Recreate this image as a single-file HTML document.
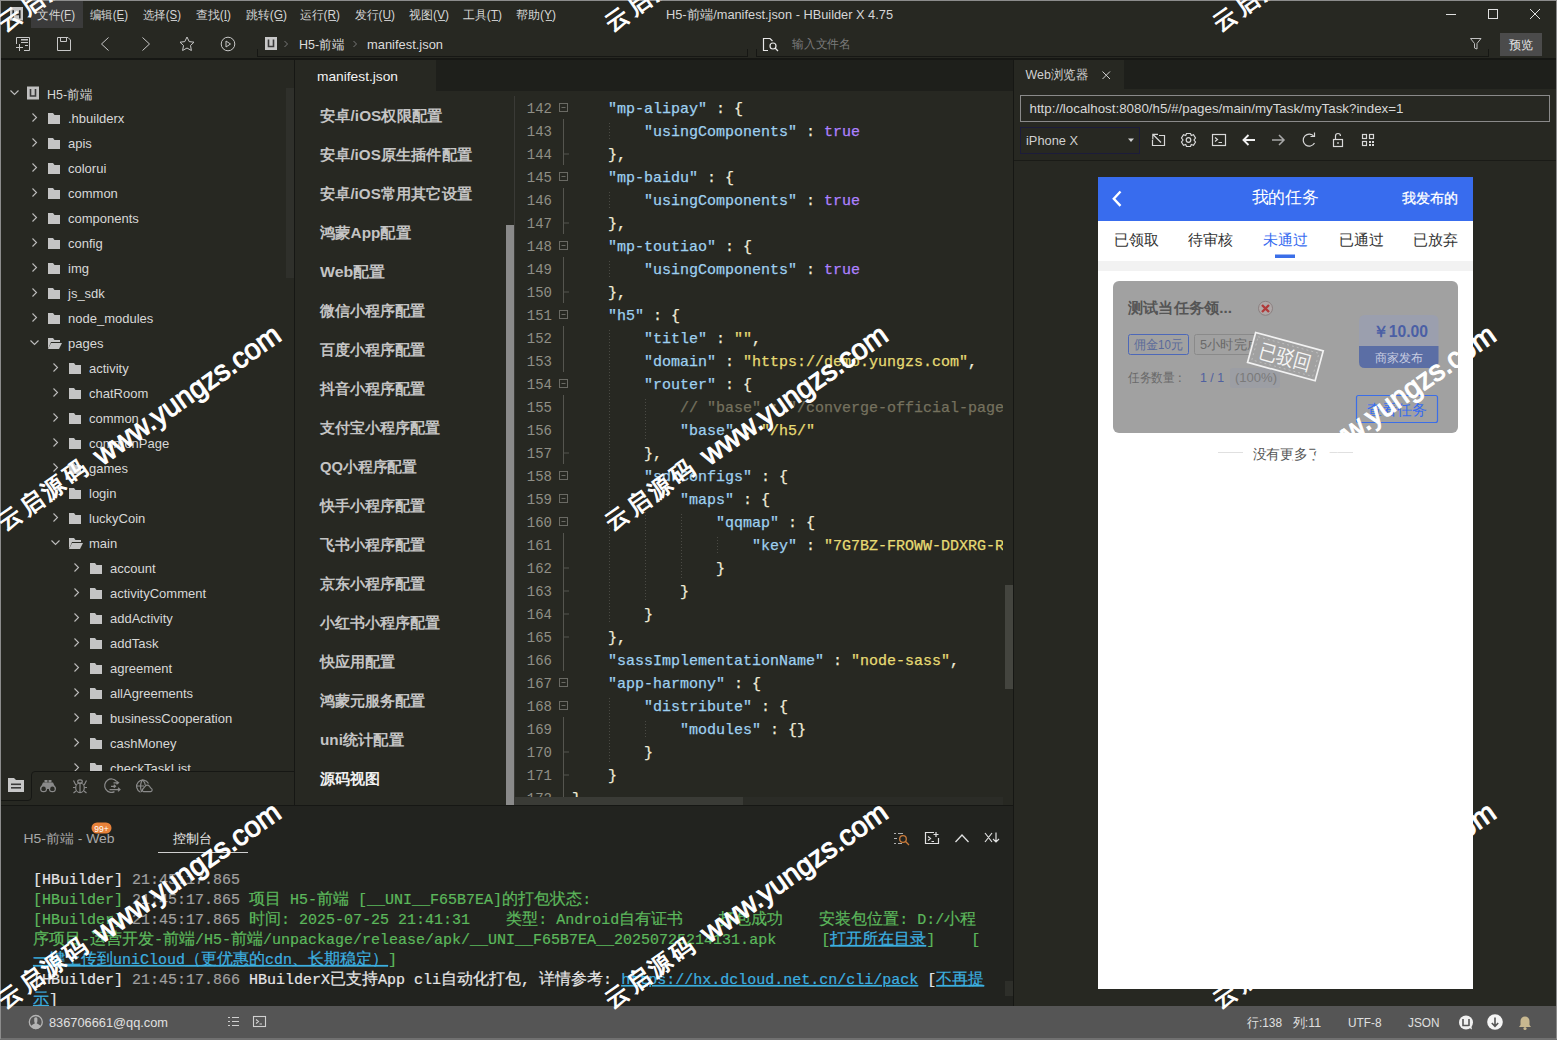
<!DOCTYPE html>
<html><head><meta charset="utf-8"><title>HBuilder X</title>
<style>html,body{margin:0;padding:0;background:#272822;width:1557px;height:1040px;overflow:hidden}</style>
</head><body><svg width="1557" height="1040" viewBox="0 0 1557 1040" style="display:block"><rect x="0" y="0" width="1557" height="1040" fill="#272822" />
<rect x="31" y="1" width="52" height="27" fill="#3b3b3b" />
<rect x="10" y="7" width="13" height="13.5" fill="#c8c8c8"/><path d="M13.2 10.3 V18.5 M19.8 10.3 V18.5 M13.2 14.4 H19.8" stroke="#2a2a2a" stroke-width="1.6" fill="none"/>
<text x="37" y="18.9" font-size="12" fill="#d6d6d6" font-family="'Liberation Sans', sans-serif" textLength="38" lengthAdjust="spacingAndGlyphs" >文件(F)</text>
<rect x="65.2" y="20" width="6" height="1" fill="#c8c8c8"/>
<text x="90" y="18.9" font-size="12" fill="#d6d6d6" font-family="'Liberation Sans', sans-serif" textLength="38" lengthAdjust="spacingAndGlyphs" >编辑(E)</text>
<rect x="117.7" y="20" width="6.5" height="1" fill="#c8c8c8"/>
<text x="143" y="18.9" font-size="12" fill="#d6d6d6" font-family="'Liberation Sans', sans-serif" textLength="38" lengthAdjust="spacingAndGlyphs" >选择(S)</text>
<rect x="170.7" y="20" width="6.5" height="1" fill="#c8c8c8"/>
<text x="196" y="18.9" font-size="12" fill="#d6d6d6" font-family="'Liberation Sans', sans-serif" textLength="35" lengthAdjust="spacingAndGlyphs" >查找(I)</text>
<rect x="224.2" y="20" width="3" height="1" fill="#c8c8c8"/>
<text x="246" y="18.9" font-size="12" fill="#d6d6d6" font-family="'Liberation Sans', sans-serif" textLength="41" lengthAdjust="spacingAndGlyphs" >跳转(G)</text>
<rect x="275.7" y="20" width="7.5" height="1" fill="#c8c8c8"/>
<text x="300" y="18.9" font-size="12" fill="#d6d6d6" font-family="'Liberation Sans', sans-serif" textLength="40" lengthAdjust="spacingAndGlyphs" >运行(R)</text>
<rect x="329.2" y="20" width="7" height="1" fill="#c8c8c8"/>
<text x="355" y="18.9" font-size="12" fill="#d6d6d6" font-family="'Liberation Sans', sans-serif" textLength="40" lengthAdjust="spacingAndGlyphs" >发行(U)</text>
<rect x="384.2" y="20" width="7" height="1" fill="#c8c8c8"/>
<text x="409" y="18.9" font-size="12" fill="#d6d6d6" font-family="'Liberation Sans', sans-serif" textLength="40" lengthAdjust="spacingAndGlyphs" >视图(V)</text>
<rect x="438.2" y="20" width="7" height="1" fill="#c8c8c8"/>
<text x="463" y="18.9" font-size="12" fill="#d6d6d6" font-family="'Liberation Sans', sans-serif" textLength="39" lengthAdjust="spacingAndGlyphs" >工具(T)</text>
<rect x="491.7" y="20" width="6.5" height="1" fill="#c8c8c8"/>
<text x="516" y="18.9" font-size="12" fill="#d6d6d6" font-family="'Liberation Sans', sans-serif" textLength="40" lengthAdjust="spacingAndGlyphs" >帮助(Y)</text>
<rect x="545.7" y="20" width="6.5" height="1" fill="#c8c8c8"/>
<text x="666" y="18.5" font-size="12.5" fill="#d6d6d6" font-family="'Liberation Sans', sans-serif" textLength="227" lengthAdjust="spacingAndGlyphs" >H5-前端/manifest.json - HBuilder X 4.75</text>
<line x1="1446" y1="14.5" x2="1456" y2="14.5" stroke="#e0e0e0" stroke-width="1" />
<rect x="1488.5" y="9.5" width="9" height="9" fill="none" stroke="#e0e0e0" stroke-width="1"/>
<line x1="1530" y1="9" x2="1540" y2="19" stroke="#e0e0e0" stroke-width="1" />
<line x1="1540" y1="9" x2="1530" y2="19" stroke="#e0e0e0" stroke-width="1" />
<g fill="none" stroke="#c8c8c8" stroke-width="1"><path d="M16.5 44 V37.5 H29.5 V50.5 H24"/><path d="M16 47.5 H23 M19.5 44 V51"/></g>
<g fill="#c8c8c8"><rect x="21" y="39" width="7" height="1.5"/><rect x="21" y="42" width="7" height="1"/><rect x="25" y="45" width="3" height="1"/></g>
<g fill="none" stroke="#c8c8c8" stroke-width="1"><path d="M57.5 37.5 H68 L70.5 40 V50.5 H57.5 Z"/><path d="M60.5 37.5 V41.5 H66.5 V37.5"/></g>
<path d="M108.5 37.5 L101.5 44 L108.5 50.5" fill="none" stroke="#c8c8c8" stroke-width="1"/>
<path d="M142.5 37.5 L149.5 44 L142.5 50.5" fill="none" stroke="#c8c8c8" stroke-width="1"/>
<path d="M187 37 L189.2 41.6 L194 42.2 L190.5 45.5 L191.4 50.5 L187 48 L182.6 50.5 L183.5 45.5 L180 42.2 L184.8 41.6 Z" fill="none" stroke="#c8c8c8" stroke-width="1" stroke-linejoin="round"/>
<circle cx="228" cy="44" r="6.8" fill="none" stroke="#c8c8c8" stroke-width="1"/><path d="M226 41 L230.5 44 L226 47 Z" fill="none" stroke="#c8c8c8" stroke-width="1"/>
<line x1="257.5" y1="49" x2="257.5" y2="57" stroke="#161714" stroke-width="1" />
<line x1="257" y1="56.5" x2="748" y2="56.5" stroke="#161714" stroke-width="1" />
<line x1="747.5" y1="49" x2="747.5" y2="57" stroke="#161714" stroke-width="1" />
<rect x="265" y="37" width="12" height="13" fill="#c8c8c8" />
<path d="M268.5 39.5 V46.5 H273.5 V39.5" fill="none" stroke="#3a3a3a" stroke-width="1.6"/>
<path d="M284.5 41 L287.5 44 L284.5 47" fill="none" stroke="#777" stroke-width="1"/>
<text x="299" y="49" font-size="13" fill="#dcdcdc" font-family="'Liberation Sans', sans-serif" textLength="45" lengthAdjust="spacingAndGlyphs" >H5-前端</text>
<path d="M353.5 41 L356.5 44 L353.5 47" fill="none" stroke="#777" stroke-width="1"/>
<text x="367" y="49" font-size="13" fill="#dcdcdc" font-family="'Liberation Sans', sans-serif" textLength="76" lengthAdjust="spacingAndGlyphs" >manifest.json</text>
<line x1="756.5" y1="49" x2="756.5" y2="57" stroke="#161714" stroke-width="1" />
<line x1="756" y1="56.5" x2="1489" y2="56.5" stroke="#161714" stroke-width="1" />
<line x1="1488.5" y1="49" x2="1488.5" y2="57" stroke="#161714" stroke-width="1" />
<g fill="none" stroke="#e8e8e8" stroke-width="1.2"><path d="M768 50.5 H763.5 V38.5 H770 L772.5 41"/><circle cx="773" cy="46" r="3"/><path d="M775 48 L778 51"/></g>
<text x="792" y="48.3" font-size="12" fill="#7a7a7a" font-family="'Liberation Sans', sans-serif" textLength="59" lengthAdjust="spacingAndGlyphs" >输入文件名</text>
<path d="M1470.5 38.5 H1481 L1477 43.5 V49 L1474.5 48 V43.5 Z" fill="none" stroke="#c0c0c0" stroke-width="1"/>
<rect x="1500" y="33" width="42" height="23" fill="#4b4b4b" />
<text x="1509" y="48.8" font-size="12" fill="#e8e8e8" font-family="'Liberation Sans', sans-serif" textLength="24" lengthAdjust="spacingAndGlyphs" >预览</text>
<rect x="0" y="58" width="1557" height="2" fill="#161714" />
<rect x="286" y="88" width="8" height="190" fill="#2f302b" />
<rect x="294" y="60" width="1" height="745" fill="#161714" />
<svg x="0" y="60" width="286" height="711" overflow="hidden"><g transform="translate(0,-60)">
<path d="M10.5 90.5 L14.5 94.5 L18.5 90.5" fill="none" stroke="#bdbdbd" stroke-width="1.1"/>
<rect x="27" y="86.5" width="12" height="13" fill="#c0c0c0" />
<path d="M30.5 89 V96 H35.5 V89" fill="none" stroke="#3a3a3a" stroke-width="1.6"/>
<text x="47" y="98.5" font-size="13" fill="#d8d8d8" font-family="'Liberation Sans', sans-serif" textLength="45" lengthAdjust="spacingAndGlyphs" >H5-前端</text>
<path d="M32.5 113.5 L36.5 117.5 L32.5 121.5" fill="none" stroke="#bdbdbd" stroke-width="1.1"/>
<path d="M48 113 H53 L54.5 115 H60 V124 H48 Z" fill="#c4c4c4"/>
<text x="68" y="123" font-size="13" fill="#d8d8d8" font-family="'Liberation Sans', sans-serif" >.hbuilderx</text>
<path d="M32.5 138.5 L36.5 142.5 L32.5 146.5" fill="none" stroke="#bdbdbd" stroke-width="1.1"/>
<path d="M48 138 H53 L54.5 140 H60 V149 H48 Z" fill="#c4c4c4"/>
<text x="68" y="148" font-size="13" fill="#d8d8d8" font-family="'Liberation Sans', sans-serif" >apis</text>
<path d="M32.5 163.5 L36.5 167.5 L32.5 171.5" fill="none" stroke="#bdbdbd" stroke-width="1.1"/>
<path d="M48 163 H53 L54.5 165 H60 V174 H48 Z" fill="#c4c4c4"/>
<text x="68" y="173" font-size="13" fill="#d8d8d8" font-family="'Liberation Sans', sans-serif" >colorui</text>
<path d="M32.5 188.5 L36.5 192.5 L32.5 196.5" fill="none" stroke="#bdbdbd" stroke-width="1.1"/>
<path d="M48 188 H53 L54.5 190 H60 V199 H48 Z" fill="#c4c4c4"/>
<text x="68" y="198" font-size="13" fill="#d8d8d8" font-family="'Liberation Sans', sans-serif" >common</text>
<path d="M32.5 213.5 L36.5 217.5 L32.5 221.5" fill="none" stroke="#bdbdbd" stroke-width="1.1"/>
<path d="M48 213 H53 L54.5 215 H60 V224 H48 Z" fill="#c4c4c4"/>
<text x="68" y="223" font-size="13" fill="#d8d8d8" font-family="'Liberation Sans', sans-serif" >components</text>
<path d="M32.5 238.5 L36.5 242.5 L32.5 246.5" fill="none" stroke="#bdbdbd" stroke-width="1.1"/>
<path d="M48 238 H53 L54.5 240 H60 V249 H48 Z" fill="#c4c4c4"/>
<text x="68" y="248" font-size="13" fill="#d8d8d8" font-family="'Liberation Sans', sans-serif" >config</text>
<path d="M32.5 263.5 L36.5 267.5 L32.5 271.5" fill="none" stroke="#bdbdbd" stroke-width="1.1"/>
<path d="M48 263 H53 L54.5 265 H60 V274 H48 Z" fill="#c4c4c4"/>
<text x="68" y="273" font-size="13" fill="#d8d8d8" font-family="'Liberation Sans', sans-serif" >img</text>
<path d="M32.5 288.5 L36.5 292.5 L32.5 296.5" fill="none" stroke="#bdbdbd" stroke-width="1.1"/>
<path d="M48 288 H53 L54.5 290 H60 V299 H48 Z" fill="#c4c4c4"/>
<text x="68" y="298" font-size="13" fill="#d8d8d8" font-family="'Liberation Sans', sans-serif" >js_sdk</text>
<path d="M32.5 313.5 L36.5 317.5 L32.5 321.5" fill="none" stroke="#bdbdbd" stroke-width="1.1"/>
<path d="M48 313 H53 L54.5 315 H60 V324 H48 Z" fill="#c4c4c4"/>
<text x="68" y="323" font-size="13" fill="#d8d8d8" font-family="'Liberation Sans', sans-serif" >node_modules</text>
<path d="M30.5 340.5 L34.5 344.5 L38.5 340.5" fill="none" stroke="#bdbdbd" stroke-width="1.1"/>
<path d="M48 338 H53 L54.5 340 H60 V342 H51 L48 349 Z" fill="#c4c4c4"/><path d="M51 343 H62 L59 349 H48 Z" fill="#c4c4c4"/>
<text x="68" y="348" font-size="13" fill="#d8d8d8" font-family="'Liberation Sans', sans-serif" >pages</text>
<path d="M53.5 363.5 L57.5 367.5 L53.5 371.5" fill="none" stroke="#bdbdbd" stroke-width="1.1"/>
<path d="M69 363 H74 L75.5 365 H81 V374 H69 Z" fill="#c4c4c4"/>
<text x="89" y="373" font-size="13" fill="#d8d8d8" font-family="'Liberation Sans', sans-serif" >activity</text>
<path d="M53.5 388.5 L57.5 392.5 L53.5 396.5" fill="none" stroke="#bdbdbd" stroke-width="1.1"/>
<path d="M69 388 H74 L75.5 390 H81 V399 H69 Z" fill="#c4c4c4"/>
<text x="89" y="398" font-size="13" fill="#d8d8d8" font-family="'Liberation Sans', sans-serif" >chatRoom</text>
<path d="M53.5 413.5 L57.5 417.5 L53.5 421.5" fill="none" stroke="#bdbdbd" stroke-width="1.1"/>
<path d="M69 413 H74 L75.5 415 H81 V424 H69 Z" fill="#c4c4c4"/>
<text x="89" y="423" font-size="13" fill="#d8d8d8" font-family="'Liberation Sans', sans-serif" >common</text>
<path d="M53.5 438.5 L57.5 442.5 L53.5 446.5" fill="none" stroke="#bdbdbd" stroke-width="1.1"/>
<path d="M69 438 H74 L75.5 440 H81 V449 H69 Z" fill="#c4c4c4"/>
<text x="89" y="448" font-size="13" fill="#d8d8d8" font-family="'Liberation Sans', sans-serif" >commonPage</text>
<path d="M53.5 463.5 L57.5 467.5 L53.5 471.5" fill="none" stroke="#bdbdbd" stroke-width="1.1"/>
<path d="M69 463 H74 L75.5 465 H81 V474 H69 Z" fill="#c4c4c4"/>
<text x="89" y="473" font-size="13" fill="#d8d8d8" font-family="'Liberation Sans', sans-serif" >games</text>
<path d="M53.5 488.5 L57.5 492.5 L53.5 496.5" fill="none" stroke="#bdbdbd" stroke-width="1.1"/>
<path d="M69 488 H74 L75.5 490 H81 V499 H69 Z" fill="#c4c4c4"/>
<text x="89" y="498" font-size="13" fill="#d8d8d8" font-family="'Liberation Sans', sans-serif" >login</text>
<path d="M53.5 513.5 L57.5 517.5 L53.5 521.5" fill="none" stroke="#bdbdbd" stroke-width="1.1"/>
<path d="M69 513 H74 L75.5 515 H81 V524 H69 Z" fill="#c4c4c4"/>
<text x="89" y="523" font-size="13" fill="#d8d8d8" font-family="'Liberation Sans', sans-serif" >luckyCoin</text>
<path d="M51.5 540.5 L55.5 544.5 L59.5 540.5" fill="none" stroke="#bdbdbd" stroke-width="1.1"/>
<path d="M69 538 H74 L75.5 540 H81 V542 H72 L69 549 Z" fill="#c4c4c4"/><path d="M72 543 H83 L80 549 H69 Z" fill="#c4c4c4"/>
<text x="89" y="548" font-size="13" fill="#d8d8d8" font-family="'Liberation Sans', sans-serif" >main</text>
<path d="M74.5 563.5 L78.5 567.5 L74.5 571.5" fill="none" stroke="#bdbdbd" stroke-width="1.1"/>
<path d="M90 563 H95 L96.5 565 H102 V574 H90 Z" fill="#c4c4c4"/>
<text x="110" y="573" font-size="13" fill="#d8d8d8" font-family="'Liberation Sans', sans-serif" >account</text>
<path d="M74.5 588.5 L78.5 592.5 L74.5 596.5" fill="none" stroke="#bdbdbd" stroke-width="1.1"/>
<path d="M90 588 H95 L96.5 590 H102 V599 H90 Z" fill="#c4c4c4"/>
<text x="110" y="598" font-size="13" fill="#d8d8d8" font-family="'Liberation Sans', sans-serif" >activityComment</text>
<path d="M74.5 613.5 L78.5 617.5 L74.5 621.5" fill="none" stroke="#bdbdbd" stroke-width="1.1"/>
<path d="M90 613 H95 L96.5 615 H102 V624 H90 Z" fill="#c4c4c4"/>
<text x="110" y="623" font-size="13" fill="#d8d8d8" font-family="'Liberation Sans', sans-serif" >addActivity</text>
<path d="M74.5 638.5 L78.5 642.5 L74.5 646.5" fill="none" stroke="#bdbdbd" stroke-width="1.1"/>
<path d="M90 638 H95 L96.5 640 H102 V649 H90 Z" fill="#c4c4c4"/>
<text x="110" y="648" font-size="13" fill="#d8d8d8" font-family="'Liberation Sans', sans-serif" >addTask</text>
<path d="M74.5 663.5 L78.5 667.5 L74.5 671.5" fill="none" stroke="#bdbdbd" stroke-width="1.1"/>
<path d="M90 663 H95 L96.5 665 H102 V674 H90 Z" fill="#c4c4c4"/>
<text x="110" y="673" font-size="13" fill="#d8d8d8" font-family="'Liberation Sans', sans-serif" >agreement</text>
<path d="M74.5 688.5 L78.5 692.5 L74.5 696.5" fill="none" stroke="#bdbdbd" stroke-width="1.1"/>
<path d="M90 688 H95 L96.5 690 H102 V699 H90 Z" fill="#c4c4c4"/>
<text x="110" y="698" font-size="13" fill="#d8d8d8" font-family="'Liberation Sans', sans-serif" >allAgreements</text>
<path d="M74.5 713.5 L78.5 717.5 L74.5 721.5" fill="none" stroke="#bdbdbd" stroke-width="1.1"/>
<path d="M90 713 H95 L96.5 715 H102 V724 H90 Z" fill="#c4c4c4"/>
<text x="110" y="723" font-size="13" fill="#d8d8d8" font-family="'Liberation Sans', sans-serif" >businessCooperation</text>
<path d="M74.5 738.5 L78.5 742.5 L74.5 746.5" fill="none" stroke="#bdbdbd" stroke-width="1.1"/>
<path d="M90 738 H95 L96.5 740 H102 V749 H90 Z" fill="#c4c4c4"/>
<text x="110" y="748" font-size="13" fill="#d8d8d8" font-family="'Liberation Sans', sans-serif" >cashMoney</text>
<path d="M74.5 763.5 L78.5 767.5 L74.5 771.5" fill="none" stroke="#bdbdbd" stroke-width="1.1"/>
<path d="M90 763 H95 L96.5 765 H102 V774 H90 Z" fill="#c4c4c4"/>
<text x="110" y="773" font-size="13" fill="#d8d8d8" font-family="'Liberation Sans', sans-serif" >checkTaskList</text>
</g></svg>
<path d="M294 771.5 H35 Q31.5 771.5 31.5 775 V797 Q31.5 800.5 28 800.5 H1" fill="none" stroke="#161714" stroke-width="1"/>
<path d="M8 778 H14 L16 780 H24 V792 H8 Z" fill="#c8c8c8"/><rect x="11" y="783.5" width="10" height="1.6" fill="#3a3a3a"/><rect x="11" y="787" width="10" height="1.6" fill="#3a3a3a"/>
<g fill="#8a8a8a"><path d="M44.5 780 H47.5 V782.5 H44.5 Z M48.5 780 H51.5 V782.5 H48.5 Z"/><path d="M43 782.5 H53 L56 789 H40 Z"/></g><g fill="none" stroke="#8a8a8a" stroke-width="1.3"><circle cx="43.6" cy="788.8" r="2.9"/><circle cx="52.4" cy="788.8" r="2.9"/></g><g fill="#2a2b26"><circle cx="43.6" cy="788.8" r="2.2"/><circle cx="52.4" cy="788.8" r="2.2"/></g>
<g fill="none" stroke="#8a8a8a" stroke-width="1.2"><ellipse cx="80" cy="787.8" rx="4.3" ry="4.8"/><ellipse cx="80" cy="781.6" rx="2.3" ry="1.7"/><path d="M80 783.5 V792 M75.8 785 L73.5 780.5 M84.2 785 L86.5 780.5 M75.5 787.5 H73 M84.5 787.5 H87 M76 791 L73.5 793 M84 791 L86.5 793"/></g>
<g fill="none" stroke="#8a8a8a" stroke-width="1.2"><path d="M116.5 781.3 A6.7 6.7 0 1 0 114.5 791.6"/><path d="M113.5 782.8 H118 M116.5 781.3 L118.5 782.8 L116.5 784.3 M111 786.3 H115.5 M113.8 784.8 L115.5 786.3 L113.8 787.8 M109.5 789.6 H120 M118 787.8 L120 789.6 L118 791.4"/></g>
<g fill="none" stroke="#8a8a8a" stroke-width="1.2"><path d="M148.5 783.5 A6.3 6.3 0 1 0 140.5 792.2"/><path d="M142.3 779.7 Q139 786 141.8 792 M142.3 779.7 Q145.5 783 145 785 M136 786 H144"/><path d="M143.5 791.6 H150.7 A1.7 1.7 0 0 0 151 788.3 L149.5 786.3 A2.7 2.7 0 0 0 145 786.3 L143.3 788.6 A1.6 1.6 0 0 0 143.5 791.6 Z"/></g>
<rect x="295" y="60" width="718" height="31" fill="#1e1f1b" />
<rect x="295" y="60" width="141" height="31" fill="#272822" />
<text x="317" y="81" font-size="13" fill="#f2f2f2" font-family="'Liberation Sans', sans-serif" textLength="81" lengthAdjust="spacingAndGlyphs" >manifest.json</text>
<text x="320" y="120.8" font-size="15" fill="#c4c4c4" font-family="'Liberation Sans', sans-serif" font-weight="bold" textLength="122.5" lengthAdjust="spacingAndGlyphs" >安卓/iOS权限配置</text>
<text x="320" y="159.8" font-size="15" fill="#c4c4c4" font-family="'Liberation Sans', sans-serif" font-weight="bold" textLength="152" lengthAdjust="spacingAndGlyphs" >安卓/iOS原生插件配置</text>
<text x="320" y="198.8" font-size="15" fill="#c4c4c4" font-family="'Liberation Sans', sans-serif" font-weight="bold" textLength="152" lengthAdjust="spacingAndGlyphs" >安卓/iOS常用其它设置</text>
<text x="320" y="237.8" font-size="15" fill="#c4c4c4" font-family="'Liberation Sans', sans-serif" font-weight="bold" textLength="91" lengthAdjust="spacingAndGlyphs" >鸿蒙App配置</text>
<text x="320" y="276.8" font-size="15" fill="#c4c4c4" font-family="'Liberation Sans', sans-serif" font-weight="bold" textLength="65" lengthAdjust="spacingAndGlyphs" >Web配置</text>
<text x="320" y="315.8" font-size="15" fill="#c4c4c4" font-family="'Liberation Sans', sans-serif" font-weight="bold" textLength="105" lengthAdjust="spacingAndGlyphs" >微信小程序配置</text>
<text x="320" y="354.8" font-size="15" fill="#c4c4c4" font-family="'Liberation Sans', sans-serif" font-weight="bold" textLength="105" lengthAdjust="spacingAndGlyphs" >百度小程序配置</text>
<text x="320" y="393.8" font-size="15" fill="#c4c4c4" font-family="'Liberation Sans', sans-serif" font-weight="bold" textLength="105" lengthAdjust="spacingAndGlyphs" >抖音小程序配置</text>
<text x="320" y="432.8" font-size="15" fill="#c4c4c4" font-family="'Liberation Sans', sans-serif" font-weight="bold" textLength="120" lengthAdjust="spacingAndGlyphs" >支付宝小程序配置</text>
<text x="320" y="471.8" font-size="15" fill="#c4c4c4" font-family="'Liberation Sans', sans-serif" font-weight="bold" textLength="97" lengthAdjust="spacingAndGlyphs" >QQ小程序配置</text>
<text x="320" y="510.8" font-size="15" fill="#c4c4c4" font-family="'Liberation Sans', sans-serif" font-weight="bold" textLength="105" lengthAdjust="spacingAndGlyphs" >快手小程序配置</text>
<text x="320" y="549.8" font-size="15" fill="#c4c4c4" font-family="'Liberation Sans', sans-serif" font-weight="bold" textLength="105" lengthAdjust="spacingAndGlyphs" >飞书小程序配置</text>
<text x="320" y="588.8" font-size="15" fill="#c4c4c4" font-family="'Liberation Sans', sans-serif" font-weight="bold" textLength="105" lengthAdjust="spacingAndGlyphs" >京东小程序配置</text>
<text x="320" y="627.8" font-size="15" fill="#c4c4c4" font-family="'Liberation Sans', sans-serif" font-weight="bold" textLength="120" lengthAdjust="spacingAndGlyphs" >小红书小程序配置</text>
<text x="320" y="666.8" font-size="15" fill="#c4c4c4" font-family="'Liberation Sans', sans-serif" font-weight="bold" textLength="75" lengthAdjust="spacingAndGlyphs" >快应用配置</text>
<text x="320" y="705.8" font-size="15" fill="#c4c4c4" font-family="'Liberation Sans', sans-serif" font-weight="bold" textLength="105" lengthAdjust="spacingAndGlyphs" >鸿蒙元服务配置</text>
<text x="320" y="744.8" font-size="15" fill="#c4c4c4" font-family="'Liberation Sans', sans-serif" font-weight="bold" textLength="84" lengthAdjust="spacingAndGlyphs" >uni统计配置</text>
<text x="320" y="783.8" font-size="15" fill="#f0f0f0" font-family="'Liberation Sans', sans-serif" font-weight="bold" textLength="60" lengthAdjust="spacingAndGlyphs" >源码视图</text>
<rect x="506" y="225" width="8" height="580" fill="#8a8a8a" />
<rect x="514" y="96" width="1" height="709" fill="#3a3a36" />
<svg x="515" y="91" width="488" height="706" overflow="hidden"><g transform="translate(-515,-91)">
<text x="552" y="113" font-size="14" fill="#8f8f86" font-family="'Liberation Mono', monospace" text-anchor="end" >142</text>
<text x="552" y="136" font-size="14" fill="#8f8f86" font-family="'Liberation Mono', monospace" text-anchor="end" >143</text>
<text x="552" y="159" font-size="14" fill="#8f8f86" font-family="'Liberation Mono', monospace" text-anchor="end" >144</text>
<text x="552" y="182" font-size="14" fill="#8f8f86" font-family="'Liberation Mono', monospace" text-anchor="end" >145</text>
<text x="552" y="205" font-size="14" fill="#8f8f86" font-family="'Liberation Mono', monospace" text-anchor="end" >146</text>
<text x="552" y="228" font-size="14" fill="#8f8f86" font-family="'Liberation Mono', monospace" text-anchor="end" >147</text>
<text x="552" y="251" font-size="14" fill="#8f8f86" font-family="'Liberation Mono', monospace" text-anchor="end" >148</text>
<text x="552" y="274" font-size="14" fill="#8f8f86" font-family="'Liberation Mono', monospace" text-anchor="end" >149</text>
<text x="552" y="297" font-size="14" fill="#8f8f86" font-family="'Liberation Mono', monospace" text-anchor="end" >150</text>
<text x="552" y="320" font-size="14" fill="#8f8f86" font-family="'Liberation Mono', monospace" text-anchor="end" >151</text>
<text x="552" y="343" font-size="14" fill="#8f8f86" font-family="'Liberation Mono', monospace" text-anchor="end" >152</text>
<text x="552" y="366" font-size="14" fill="#8f8f86" font-family="'Liberation Mono', monospace" text-anchor="end" >153</text>
<text x="552" y="389" font-size="14" fill="#8f8f86" font-family="'Liberation Mono', monospace" text-anchor="end" >154</text>
<text x="552" y="412" font-size="14" fill="#8f8f86" font-family="'Liberation Mono', monospace" text-anchor="end" >155</text>
<text x="552" y="435" font-size="14" fill="#8f8f86" font-family="'Liberation Mono', monospace" text-anchor="end" >156</text>
<text x="552" y="458" font-size="14" fill="#8f8f86" font-family="'Liberation Mono', monospace" text-anchor="end" >157</text>
<text x="552" y="481" font-size="14" fill="#8f8f86" font-family="'Liberation Mono', monospace" text-anchor="end" >158</text>
<text x="552" y="504" font-size="14" fill="#8f8f86" font-family="'Liberation Mono', monospace" text-anchor="end" >159</text>
<text x="552" y="527" font-size="14" fill="#8f8f86" font-family="'Liberation Mono', monospace" text-anchor="end" >160</text>
<text x="552" y="550" font-size="14" fill="#8f8f86" font-family="'Liberation Mono', monospace" text-anchor="end" >161</text>
<text x="552" y="573" font-size="14" fill="#8f8f86" font-family="'Liberation Mono', monospace" text-anchor="end" >162</text>
<text x="552" y="596" font-size="14" fill="#8f8f86" font-family="'Liberation Mono', monospace" text-anchor="end" >163</text>
<text x="552" y="619" font-size="14" fill="#8f8f86" font-family="'Liberation Mono', monospace" text-anchor="end" >164</text>
<text x="552" y="642" font-size="14" fill="#8f8f86" font-family="'Liberation Mono', monospace" text-anchor="end" >165</text>
<text x="552" y="665" font-size="14" fill="#8f8f86" font-family="'Liberation Mono', monospace" text-anchor="end" >166</text>
<text x="552" y="688" font-size="14" fill="#8f8f86" font-family="'Liberation Mono', monospace" text-anchor="end" >167</text>
<text x="552" y="711" font-size="14" fill="#8f8f86" font-family="'Liberation Mono', monospace" text-anchor="end" >168</text>
<text x="552" y="734" font-size="14" fill="#8f8f86" font-family="'Liberation Mono', monospace" text-anchor="end" >169</text>
<text x="552" y="757" font-size="14" fill="#8f8f86" font-family="'Liberation Mono', monospace" text-anchor="end" >170</text>
<text x="552" y="780" font-size="14" fill="#8f8f86" font-family="'Liberation Mono', monospace" text-anchor="end" >171</text>
<text x="552" y="803" font-size="14" fill="#8f8f86" font-family="'Liberation Mono', monospace" text-anchor="end" >172</text>
<text x="608" y="113" font-size="15" font-family="'Liberation Mono', monospace" xml:space="preserve" ><tspan fill="#9ed0f0" stroke="#9ed0f0" stroke-width="0.25">&quot;mp-alipay&quot;</tspan><tspan fill="#f0ecd8" stroke="#f0ecd8" stroke-width="0.25"> : {</tspan></text>
<text x="644" y="136" font-size="15" font-family="'Liberation Mono', monospace" xml:space="preserve" ><tspan fill="#9ed0f0" stroke="#9ed0f0" stroke-width="0.25">&quot;usingComponents&quot;</tspan><tspan fill="#f0ecd8" stroke="#f0ecd8" stroke-width="0.25"> : </tspan><tspan fill="#ae81ff" stroke="#ae81ff" stroke-width="0.25">true</tspan></text>
<text x="608" y="159" font-size="15" font-family="'Liberation Mono', monospace" xml:space="preserve" ><tspan fill="#f0ecd8" stroke="#f0ecd8" stroke-width="0.25">},</tspan></text>
<text x="608" y="182" font-size="15" font-family="'Liberation Mono', monospace" xml:space="preserve" ><tspan fill="#9ed0f0" stroke="#9ed0f0" stroke-width="0.25">&quot;mp-baidu&quot;</tspan><tspan fill="#f0ecd8" stroke="#f0ecd8" stroke-width="0.25"> : {</tspan></text>
<text x="644" y="205" font-size="15" font-family="'Liberation Mono', monospace" xml:space="preserve" ><tspan fill="#9ed0f0" stroke="#9ed0f0" stroke-width="0.25">&quot;usingComponents&quot;</tspan><tspan fill="#f0ecd8" stroke="#f0ecd8" stroke-width="0.25"> : </tspan><tspan fill="#ae81ff" stroke="#ae81ff" stroke-width="0.25">true</tspan></text>
<text x="608" y="228" font-size="15" font-family="'Liberation Mono', monospace" xml:space="preserve" ><tspan fill="#f0ecd8" stroke="#f0ecd8" stroke-width="0.25">},</tspan></text>
<text x="608" y="251" font-size="15" font-family="'Liberation Mono', monospace" xml:space="preserve" ><tspan fill="#9ed0f0" stroke="#9ed0f0" stroke-width="0.25">&quot;mp-toutiao&quot;</tspan><tspan fill="#f0ecd8" stroke="#f0ecd8" stroke-width="0.25"> : {</tspan></text>
<text x="644" y="274" font-size="15" font-family="'Liberation Mono', monospace" xml:space="preserve" ><tspan fill="#9ed0f0" stroke="#9ed0f0" stroke-width="0.25">&quot;usingComponents&quot;</tspan><tspan fill="#f0ecd8" stroke="#f0ecd8" stroke-width="0.25"> : </tspan><tspan fill="#ae81ff" stroke="#ae81ff" stroke-width="0.25">true</tspan></text>
<text x="608" y="297" font-size="15" font-family="'Liberation Mono', monospace" xml:space="preserve" ><tspan fill="#f0ecd8" stroke="#f0ecd8" stroke-width="0.25">},</tspan></text>
<text x="608" y="320" font-size="15" font-family="'Liberation Mono', monospace" xml:space="preserve" ><tspan fill="#9ed0f0" stroke="#9ed0f0" stroke-width="0.25">&quot;h5&quot;</tspan><tspan fill="#f0ecd8" stroke="#f0ecd8" stroke-width="0.25"> : {</tspan></text>
<text x="644" y="343" font-size="15" font-family="'Liberation Mono', monospace" xml:space="preserve" ><tspan fill="#9ed0f0" stroke="#9ed0f0" stroke-width="0.25">&quot;title&quot;</tspan><tspan fill="#f0ecd8" stroke="#f0ecd8" stroke-width="0.25"> : </tspan><tspan fill="#e6db74" stroke="#e6db74" stroke-width="0.25">&quot;&quot;</tspan><tspan fill="#f0ecd8" stroke="#f0ecd8" stroke-width="0.25">,</tspan></text>
<text x="644" y="366" font-size="15" font-family="'Liberation Mono', monospace" xml:space="preserve" ><tspan fill="#9ed0f0" stroke="#9ed0f0" stroke-width="0.25">&quot;domain&quot;</tspan><tspan fill="#f0ecd8" stroke="#f0ecd8" stroke-width="0.25"> : </tspan><tspan fill="#e6db74" stroke="#e6db74" stroke-width="0.25">&quot;https://demo.yungzs.com&quot;</tspan><tspan fill="#f0ecd8" stroke="#f0ecd8" stroke-width="0.25">,</tspan></text>
<text x="644" y="389" font-size="15" font-family="'Liberation Mono', monospace" xml:space="preserve" ><tspan fill="#9ed0f0" stroke="#9ed0f0" stroke-width="0.25">&quot;router&quot;</tspan><tspan fill="#f0ecd8" stroke="#f0ecd8" stroke-width="0.25"> : {</tspan></text>
<text x="680" y="412" font-size="15" font-family="'Liberation Mono', monospace" xml:space="preserve" ><tspan fill="#75715e" stroke="#75715e" stroke-width="0.25">// &quot;base&quot; : &quot;/converge-official-page</tspan></text>
<text x="680" y="435" font-size="15" font-family="'Liberation Mono', monospace" xml:space="preserve" ><tspan fill="#9ed0f0" stroke="#9ed0f0" stroke-width="0.25">&quot;base&quot;</tspan><tspan fill="#f0ecd8" stroke="#f0ecd8" stroke-width="0.25"> : </tspan><tspan fill="#e6db74" stroke="#e6db74" stroke-width="0.25">&quot;/h5/&quot;</tspan></text>
<text x="644" y="458" font-size="15" font-family="'Liberation Mono', monospace" xml:space="preserve" ><tspan fill="#f0ecd8" stroke="#f0ecd8" stroke-width="0.25">},</tspan></text>
<text x="644" y="481" font-size="15" font-family="'Liberation Mono', monospace" xml:space="preserve" ><tspan fill="#9ed0f0" stroke="#9ed0f0" stroke-width="0.25">&quot;sdkConfigs&quot;</tspan><tspan fill="#f0ecd8" stroke="#f0ecd8" stroke-width="0.25"> : {</tspan></text>
<text x="680" y="504" font-size="15" font-family="'Liberation Mono', monospace" xml:space="preserve" ><tspan fill="#9ed0f0" stroke="#9ed0f0" stroke-width="0.25">&quot;maps&quot;</tspan><tspan fill="#f0ecd8" stroke="#f0ecd8" stroke-width="0.25"> : {</tspan></text>
<text x="716" y="527" font-size="15" font-family="'Liberation Mono', monospace" xml:space="preserve" ><tspan fill="#9ed0f0" stroke="#9ed0f0" stroke-width="0.25">&quot;qqmap&quot;</tspan><tspan fill="#f0ecd8" stroke="#f0ecd8" stroke-width="0.25"> : {</tspan></text>
<text x="752" y="550" font-size="15" font-family="'Liberation Mono', monospace" xml:space="preserve" ><tspan fill="#9ed0f0" stroke="#9ed0f0" stroke-width="0.25">&quot;key&quot;</tspan><tspan fill="#f0ecd8" stroke="#f0ecd8" stroke-width="0.25"> : </tspan><tspan fill="#e6db74" stroke="#e6db74" stroke-width="0.25">&quot;7G7BZ-FROWW-DDXRG-R</tspan></text>
<text x="716" y="573" font-size="15" font-family="'Liberation Mono', monospace" xml:space="preserve" ><tspan fill="#f0ecd8" stroke="#f0ecd8" stroke-width="0.25">}</tspan></text>
<text x="680" y="596" font-size="15" font-family="'Liberation Mono', monospace" xml:space="preserve" ><tspan fill="#f0ecd8" stroke="#f0ecd8" stroke-width="0.25">}</tspan></text>
<text x="644" y="619" font-size="15" font-family="'Liberation Mono', monospace" xml:space="preserve" ><tspan fill="#f0ecd8" stroke="#f0ecd8" stroke-width="0.25">}</tspan></text>
<text x="608" y="642" font-size="15" font-family="'Liberation Mono', monospace" xml:space="preserve" ><tspan fill="#f0ecd8" stroke="#f0ecd8" stroke-width="0.25">},</tspan></text>
<text x="608" y="665" font-size="15" font-family="'Liberation Mono', monospace" xml:space="preserve" ><tspan fill="#9ed0f0" stroke="#9ed0f0" stroke-width="0.25">&quot;sassImplementationName&quot;</tspan><tspan fill="#f0ecd8" stroke="#f0ecd8" stroke-width="0.25"> : </tspan><tspan fill="#e6db74" stroke="#e6db74" stroke-width="0.25">&quot;node-sass&quot;</tspan><tspan fill="#f0ecd8" stroke="#f0ecd8" stroke-width="0.25">,</tspan></text>
<text x="608" y="688" font-size="15" font-family="'Liberation Mono', monospace" xml:space="preserve" ><tspan fill="#9ed0f0" stroke="#9ed0f0" stroke-width="0.25">&quot;app-harmony&quot;</tspan><tspan fill="#f0ecd8" stroke="#f0ecd8" stroke-width="0.25"> : {</tspan></text>
<text x="644" y="711" font-size="15" font-family="'Liberation Mono', monospace" xml:space="preserve" ><tspan fill="#9ed0f0" stroke="#9ed0f0" stroke-width="0.25">&quot;distribute&quot;</tspan><tspan fill="#f0ecd8" stroke="#f0ecd8" stroke-width="0.25"> : {</tspan></text>
<text x="680" y="734" font-size="15" font-family="'Liberation Mono', monospace" xml:space="preserve" ><tspan fill="#9ed0f0" stroke="#9ed0f0" stroke-width="0.25">&quot;modules&quot;</tspan><tspan fill="#f0ecd8" stroke="#f0ecd8" stroke-width="0.25"> : {}</tspan></text>
<text x="644" y="757" font-size="15" font-family="'Liberation Mono', monospace" xml:space="preserve" ><tspan fill="#f0ecd8" stroke="#f0ecd8" stroke-width="0.25">}</tspan></text>
<text x="608" y="780" font-size="15" font-family="'Liberation Mono', monospace" xml:space="preserve" ><tspan fill="#f0ecd8" stroke="#f0ecd8" stroke-width="0.25">}</tspan></text>
<text x="572" y="803" font-size="15" font-family="'Liberation Mono', monospace" xml:space="preserve" ><tspan fill="#f0ecd8" stroke="#f0ecd8" stroke-width="0.25">}</tspan></text>
<rect x="559.5" y="103.5" width="8" height="8" fill="none" stroke="#6a6a64" stroke-width="1"/><line x1="561.5" y1="107.5" x2="565.5" y2="107.5" stroke="#6a6a64"/>
<rect x="559.5" y="172.5" width="8" height="8" fill="none" stroke="#6a6a64" stroke-width="1"/><line x1="561.5" y1="176.5" x2="565.5" y2="176.5" stroke="#6a6a64"/>
<rect x="559.5" y="241.5" width="8" height="8" fill="none" stroke="#6a6a64" stroke-width="1"/><line x1="561.5" y1="245.5" x2="565.5" y2="245.5" stroke="#6a6a64"/>
<rect x="559.5" y="310.5" width="8" height="8" fill="none" stroke="#6a6a64" stroke-width="1"/><line x1="561.5" y1="314.5" x2="565.5" y2="314.5" stroke="#6a6a64"/>
<rect x="559.5" y="379.5" width="8" height="8" fill="none" stroke="#6a6a64" stroke-width="1"/><line x1="561.5" y1="383.5" x2="565.5" y2="383.5" stroke="#6a6a64"/>
<rect x="559.5" y="471.5" width="8" height="8" fill="none" stroke="#6a6a64" stroke-width="1"/><line x1="561.5" y1="475.5" x2="565.5" y2="475.5" stroke="#6a6a64"/>
<rect x="559.5" y="494.5" width="8" height="8" fill="none" stroke="#6a6a64" stroke-width="1"/><line x1="561.5" y1="498.5" x2="565.5" y2="498.5" stroke="#6a6a64"/>
<rect x="559.5" y="517.5" width="8" height="8" fill="none" stroke="#6a6a64" stroke-width="1"/><line x1="561.5" y1="521.5" x2="565.5" y2="521.5" stroke="#6a6a64"/>
<rect x="559.5" y="678.5" width="8" height="8" fill="none" stroke="#6a6a64" stroke-width="1"/><line x1="561.5" y1="682.5" x2="565.5" y2="682.5" stroke="#6a6a64"/>
<rect x="559.5" y="701.5" width="8" height="8" fill="none" stroke="#6a6a64" stroke-width="1"/><line x1="561.5" y1="705.5" x2="565.5" y2="705.5" stroke="#6a6a64"/>
<line x1="563.5" y1="119.0" x2="563.5" y2="165.0" stroke="#55554f"/>
<line x1="563.5" y1="188.0" x2="563.5" y2="234.0" stroke="#55554f"/>
<line x1="563.5" y1="257.0" x2="563.5" y2="303.0" stroke="#55554f"/>
<line x1="563.5" y1="326.0" x2="563.5" y2="372.0" stroke="#55554f"/>
<line x1="563.5" y1="395.0" x2="563.5" y2="464.0" stroke="#55554f"/>
<line x1="563.5" y1="533.0" x2="563.5" y2="671.0" stroke="#55554f"/>
<line x1="563.5" y1="717.0" x2="563.5" y2="809.0" stroke="#55554f"/>
<line x1="563.5" y1="154.0" x2="569" y2="154.0" stroke="#55554f"/>
<line x1="563.5" y1="223.0" x2="569" y2="223.0" stroke="#55554f"/>
<line x1="563.5" y1="292.0" x2="569" y2="292.0" stroke="#55554f"/>
<line x1="563.5" y1="453.0" x2="569" y2="453.0" stroke="#55554f"/>
<line x1="563.5" y1="568.0" x2="569" y2="568.0" stroke="#55554f"/>
<line x1="563.5" y1="591.0" x2="569" y2="591.0" stroke="#55554f"/>
<line x1="563.5" y1="614.0" x2="569" y2="614.0" stroke="#55554f"/>
<line x1="563.5" y1="637.0" x2="569" y2="637.0" stroke="#55554f"/>
<line x1="563.5" y1="752.0" x2="569" y2="752.0" stroke="#55554f"/>
<line x1="563.5" y1="775.0" x2="569" y2="775.0" stroke="#55554f"/>
<line x1="609.5" y1="123" x2="609.5" y2="141" stroke="#4a4a44" stroke-dasharray="1 2"/>
<line x1="609.5" y1="192" x2="609.5" y2="210" stroke="#4a4a44" stroke-dasharray="1 2"/>
<line x1="609.5" y1="261" x2="609.5" y2="279" stroke="#4a4a44" stroke-dasharray="1 2"/>
<line x1="609.5" y1="330" x2="609.5" y2="624" stroke="#4a4a44" stroke-dasharray="1 2"/>
<line x1="645.5" y1="399" x2="645.5" y2="440" stroke="#4a4a44" stroke-dasharray="1 2"/>
<line x1="645.5" y1="491" x2="645.5" y2="601" stroke="#4a4a44" stroke-dasharray="1 2"/>
<line x1="681.5" y1="514" x2="681.5" y2="578" stroke="#4a4a44" stroke-dasharray="1 2"/>
<line x1="717.5" y1="537" x2="717.5" y2="555" stroke="#4a4a44" stroke-dasharray="1 2"/>
<line x1="609.5" y1="698" x2="609.5" y2="762" stroke="#4a4a44" stroke-dasharray="1 2"/>
<line x1="645.5" y1="721" x2="645.5" y2="739" stroke="#4a4a44" stroke-dasharray="1 2"/>
</g></svg>
<rect x="515" y="797" width="488" height="8" fill="#2b2c27" />
<rect x="515" y="797" width="228" height="8" fill="#3a3b36" />
<rect x="1005" y="585" width="8" height="104" fill="#44453f" />
<rect x="1013" y="60" width="1" height="945" fill="#161714" />
<rect x="1014" y="60" width="543" height="29" fill="#1e1f1b" />
<rect x="1014" y="60" width="110" height="29" fill="#272822" />
<text x="1025.5" y="78.8" font-size="13" fill="#d0d0d0" font-family="'Liberation Sans', sans-serif" textLength="62.5" lengthAdjust="spacingAndGlyphs" >Web浏览器</text>
<line x1="1102.5" y1="71.5" x2="1110" y2="79" stroke="#d0d0d0" stroke-width="1" />
<line x1="1110" y1="71.5" x2="1102.5" y2="79" stroke="#d0d0d0" stroke-width="1" />
<rect x="1020.5" y="95.5" width="529" height="26" fill="none" stroke="#8a8a8a" stroke-width="1"/>
<text x="1029.5" y="113" font-size="13" fill="#d8d8d8" font-family="'Liberation Sans', sans-serif" textLength="374" lengthAdjust="spacingAndGlyphs" >http://localhost:8080/h5/#/pages/main/myTask/myTask?index=1</text>
<rect x="1020.5" y="127.5" width="119" height="26" fill="none" stroke="#1c1c3a" stroke-width="1"/>
<text x="1026" y="145" font-size="13" fill="#d0d0d0" font-family="'Liberation Sans', sans-serif" textLength="52" lengthAdjust="spacingAndGlyphs" >iPhone X</text>
<path d="M1128 138.5 H1134 L1131 142 Z" fill="#d0d0d0"/>
<g fill="none" stroke="#d8d8d8" stroke-width="1.2"><path d="M1159 135.5 H1164.5 V145.5 H1152.5 V140"/><path d="M1153 134.5 L1161 142.5 M1152.8 139.5 V134.3 H1158"/></g>
<g fill="none" stroke="#d8d8d8" stroke-width="1.2"><circle cx="1188.5" cy="140" r="2.3"/><path d="M1186.5 133.5 H1190.5 L1191.3 135.5 L1193.5 134.8 L1195.5 138 L1194 140 L1195.5 142 L1193.5 145.2 L1191.3 144.5 L1190.5 146.5 H1186.5 L1185.7 144.5 L1183.5 145.2 L1181.5 142 L1183 140 L1181.5 138 L1183.5 134.8 L1185.7 135.5 Z"/></g>
<g fill="none" stroke="#d8d8d8" stroke-width="1.2"><rect x="1212.5" y="134.5" width="13" height="11"/><path d="M1215 137.5 L1217.5 139.5 L1215 141.5 M1218.5 142.5 H1222"/></g>
<g fill="none" stroke="#d8d8d8" stroke-width="1.5"><path d="M1255 140 H1243.5 M1248.5 135 L1243.5 140 L1248.5 145" stroke-width="1.9" stroke="#f0f0f0"/></g><g fill="none" stroke="#a8a8a8" stroke-width="1.5"><path d="M1272 140 H1284 M1279 135 L1284 140 L1279 145"/></g>
<g fill="none" stroke="#d8d8d8" stroke-width="1.2"><path d="M1314 136.5 A6 6 0 1 0 1314.5 143"/><path d="M1310.5 136.5 H1314.5 V132.5"/></g>
<g fill="none" stroke="#d8d8d8" stroke-width="1.2"><rect x="1333.5" y="139.5" width="9" height="7"/><path d="M1335.5 139.5 V136 A2.5 2.5 0 0 1 1340.5 136"/><path d="M1338 142 V144"/></g>
<g fill="none" stroke="#d8d8d8" stroke-width="1.2"><rect x="1362.5" y="134.5" width="4" height="4"/><rect x="1369.5" y="134.5" width="4" height="4"/><rect x="1362.5" y="141.5" width="4" height="4"/></g><g fill="#d8d8d8"><rect x="1369" y="141" width="2" height="2"/><rect x="1372" y="144" width="2" height="2"/><rect x="1372" y="141" width="2" height="2"/><rect x="1369" y="144" width="2" height="2"/></g>
<rect x="1014" y="160" width="543" height="1" fill="#1a1b17" />
<rect x="1098" y="177" width="375" height="812" fill="#ffffff" />
<rect x="1098" y="177" width="375" height="44" fill="#386cee" />
<path d="M1120.5 191.5 L1113.8 198.7 L1120.5 205.9" fill="none" stroke="#fff" stroke-width="2.4"/>
<text x="1251.5" y="203.3" font-size="17" fill="#ffffff" font-family="'Liberation Sans', sans-serif" textLength="67.5" lengthAdjust="spacingAndGlyphs" >我的任务</text>
<text x="1402" y="203.2" font-size="14" fill="#ffffff" font-family="'Liberation Sans', sans-serif" textLength="56" lengthAdjust="spacingAndGlyphs" stroke="#fff" stroke-width="0.3">我发布的</text>
<text x="1113.5" y="245" font-size="15" fill="#333" font-family="'Liberation Sans', sans-serif" textLength="45" lengthAdjust="spacingAndGlyphs" >已领取</text>
<text x="1188" y="245" font-size="15" fill="#333" font-family="'Liberation Sans', sans-serif" textLength="45" lengthAdjust="spacingAndGlyphs" >待审核</text>
<text x="1263" y="245" font-size="15" fill="#386cf0" font-family="'Liberation Sans', sans-serif" textLength="45" lengthAdjust="spacingAndGlyphs" >未通过</text>
<text x="1338.5" y="245" font-size="15" fill="#333" font-family="'Liberation Sans', sans-serif" textLength="45" lengthAdjust="spacingAndGlyphs" >已通过</text>
<text x="1413" y="245" font-size="15" fill="#333" font-family="'Liberation Sans', sans-serif" textLength="45" lengthAdjust="spacingAndGlyphs" >已放弃</text>
<rect x="1275" y="254.5" width="20" height="3.5" fill="#3b6ee8" />
<rect x="1098" y="261" width="375" height="10" fill="#f2f2f2" />
<rect x="1113" y="281" width="345" height="152" rx="6" fill="#a1a1a1"/>
<text x="1128" y="313" font-size="15" fill="#555555" font-family="'Liberation Sans', sans-serif" font-weight="bold" textLength="104" lengthAdjust="spacingAndGlyphs" >测试当任务领...</text>
<circle cx="1265.5" cy="308.3" r="7" fill="#b0a8a8" stroke="#8a8080" stroke-width="1"/><path d="M1262 305 L1269 312 M1269 305 L1262 312" stroke="#b03a3a" stroke-width="2.4"/>
<rect x="1128.5" y="334.5" width="60" height="20" rx="2" fill="none" stroke="#4d68b8" stroke-width="1"/>
<text x="1134" y="349" font-size="12.5" fill="#5a6a9a" font-family="'Liberation Sans', sans-serif" textLength="49" lengthAdjust="spacingAndGlyphs" >佣金10元</text>
<rect x="1194.5" y="334.5" width="66" height="20" rx="2" fill="none" stroke="#8a8a8a" stroke-width="1"/>
<text x="1200" y="349" font-size="12.5" fill="#6a6a6a" font-family="'Liberation Sans', sans-serif" textLength="60" lengthAdjust="spacingAndGlyphs" >5小时完成</text>
<text x="1128" y="381.5" font-size="13" fill="#6a6a6a" font-family="'Liberation Sans', sans-serif" textLength="58" lengthAdjust="spacingAndGlyphs" >任务数量：</text>
<text x="1200" y="381.5" font-size="13" fill="#5060a0" font-family="'Liberation Sans', sans-serif" textLength="24" lengthAdjust="spacingAndGlyphs" >1 / 1</text>
<rect x="1230" y="368" width="50" height="20" rx="3" fill="#9c9ea4"/>
<text x="1235" y="381.5" font-size="13" fill="#7a7a7a" font-family="'Liberation Sans', sans-serif" textLength="42" lengthAdjust="spacingAndGlyphs" >(100%)</text>
<g transform="translate(1285.4,356.6) rotate(15.2)"><rect x="-35" y="-15.5" width="70" height="31" fill="#a1a1a1" stroke="#f2f2f2" stroke-width="1.7"/><rect x="-31.5" y="-12" width="63" height="24" fill="none" stroke="#c4c4c4" stroke-width="0.7" stroke-dasharray="2 3"/><text x="0" y="7.3" text-anchor="middle" font-size="20" fill="#f6f6f6" font-family="'Liberation Sans', sans-serif" textLength="53" lengthAdjust="spacingAndGlyphs">已驳回</text></g>
<path d="M1365 315 H1432.5 Q1438.5 315 1438.5 321 V346 H1359 V321 Q1359 315 1365 315 Z" fill="#9b9fae"/>
<path d="M1359 346 H1438.5 V362 Q1438.5 368 1432.5 368 H1365 Q1359 368 1359 362 Z" fill="#5b6ea5"/>
<text x="1373" y="337" font-size="16" fill="#4b5fa5" font-family="'Liberation Sans', sans-serif" font-weight="bold" textLength="55" lengthAdjust="spacingAndGlyphs" >￥10.00</text>
<text x="1375" y="362" font-size="12" fill="#c8cce0" font-family="'Liberation Sans', sans-serif" textLength="48" lengthAdjust="spacingAndGlyphs" >商家发布</text>
<rect x="1356.5" y="395.5" width="81" height="27" rx="2" fill="none" stroke="#3b6ee8" stroke-width="1.2"/>
<text x="1367" y="415" font-size="15" fill="#386cf0" font-family="'Liberation Sans', sans-serif" textLength="60" lengthAdjust="spacingAndGlyphs" >查看任务</text>
<line x1="1218" y1="452.5" x2="1243" y2="452.5" stroke="#e0e0e0" stroke-width="1" />
<line x1="1329" y1="452.5" x2="1353" y2="452.5" stroke="#e0e0e0" stroke-width="1" />
<text x="1252.5" y="458.5" font-size="14" fill="#555555" font-family="'Liberation Sans', sans-serif" textLength="69" lengthAdjust="spacingAndGlyphs" >没有更多了</text>
<rect x="0" y="805" width="1013" height="201" fill="#22231f" />
<rect x="0" y="805" width="1013" height="1" fill="#161714" />
<text x="23.5" y="843" font-size="13" fill="#a8a8a8" font-family="'Liberation Sans', sans-serif" textLength="91" lengthAdjust="spacingAndGlyphs" >H5-前端 - Web</text>
<rect x="91.5" y="822.5" width="20" height="11" rx="5.5" fill="#e8823a"/>
<text x="101.5" y="831.5" font-size="8.5" fill="#ffffff" font-family="'Liberation Sans', sans-serif" text-anchor="middle" >99+</text>
<text x="173" y="843" font-size="13" fill="#eeeeee" font-family="'Liberation Sans', sans-serif" textLength="39" lengthAdjust="spacingAndGlyphs" >控制台</text>
<line x1="158" y1="852.5" x2="248" y2="852.5" stroke="#cfcfcf" stroke-width="1" />
<g fill="none" stroke="#b0b0b0" stroke-width="1.2"><path d="M894 833.5 H896 M898 833.5 H903 M894 838.5 H897 M894 843.5 H896 M898 843.5 H902"/></g><g fill="none" stroke="#c87a3a" stroke-width="1.3"><circle cx="903" cy="839" r="3.3"/><path d="M905.3 841.3 L909 845"/></g>
<g fill="none" stroke="#e0e0e0" stroke-width="1.2"><path d="M934 832.5 H925.5 V843.5 H938.5 V838"/><path d="M928 836.5 L930.5 838.5 L928 840.5 M931.5 841.5 H934 M936 832 V837 M933.5 834.5 H938.5"/></g>
<path d="M955.5 842 L962 835 L968.5 842" fill="none" stroke="#e0e0e0" stroke-width="1.3"/>
<g fill="none" stroke="#e0e0e0" stroke-width="1.2"><path d="M985 833 L992 842 M992 833 L985 842 M996 832.5 V842 M993 839 L996 842 L999 839"/></g>
<svg x="0" y="860" width="1004" height="146" overflow="hidden"><g transform="translate(0,-860)">
<text x="33" y="884" font-size="15" font-family="'Liberation Mono', monospace" xml:space="preserve"><tspan fill="#e6e6e6" stroke="#e6e6e6" stroke-width="0.2">[HBuilder] </tspan><tspan fill="#a0a0a0" stroke="#a0a0a0" stroke-width="0.2">21:45:17.865</tspan></text>
<text x="33" y="904" font-size="15" font-family="'Liberation Mono', monospace" xml:space="preserve"><tspan fill="#5cb85c" stroke="#5cb85c" stroke-width="0.2">[HBuilder] </tspan><tspan fill="#a0a0a0" stroke="#a0a0a0" stroke-width="0.2">21:45:17.865</tspan><tspan fill="#5cb85c" stroke="#5cb85c" stroke-width="0.2"> </tspan><tspan fill="#5cb85c" stroke="#5cb85c" stroke-width="0.2" font-size="16">项目</tspan><tspan fill="#5cb85c" stroke="#5cb85c" stroke-width="0.2"> H5-</tspan><tspan fill="#5cb85c" stroke="#5cb85c" stroke-width="0.2" font-size="16">前端</tspan><tspan fill="#5cb85c" stroke="#5cb85c" stroke-width="0.2"> [__UNI__F65B7EA]</tspan><tspan fill="#5cb85c" stroke="#5cb85c" stroke-width="0.2" font-size="16">的打包状态</tspan><tspan fill="#5cb85c" stroke="#5cb85c" stroke-width="0.2">:</tspan></text>
<text x="33" y="924" font-size="15" font-family="'Liberation Mono', monospace" xml:space="preserve"><tspan fill="#5cb85c" stroke="#5cb85c" stroke-width="0.2">[HBuilder] </tspan><tspan fill="#a0a0a0" stroke="#a0a0a0" stroke-width="0.2">21:45:17.865</tspan><tspan fill="#5cb85c" stroke="#5cb85c" stroke-width="0.2"> </tspan><tspan fill="#5cb85c" stroke="#5cb85c" stroke-width="0.2" font-size="16">时间</tspan><tspan fill="#5cb85c" stroke="#5cb85c" stroke-width="0.2">: 2025-07-25 21:41:31    </tspan><tspan fill="#5cb85c" stroke="#5cb85c" stroke-width="0.2" font-size="16">类型</tspan><tspan fill="#5cb85c" stroke="#5cb85c" stroke-width="0.2">: Android</tspan><tspan fill="#5cb85c" stroke="#5cb85c" stroke-width="0.2" font-size="16">自有证书</tspan><tspan fill="#5cb85c" stroke="#5cb85c" stroke-width="0.2">    </tspan><tspan fill="#5cb85c" stroke="#5cb85c" stroke-width="0.2" font-size="16">打包成功</tspan><tspan fill="#5cb85c" stroke="#5cb85c" stroke-width="0.2">    </tspan><tspan fill="#5cb85c" stroke="#5cb85c" stroke-width="0.2" font-size="16">安装包位置</tspan><tspan fill="#5cb85c" stroke="#5cb85c" stroke-width="0.2">: D:/</tspan><tspan fill="#5cb85c" stroke="#5cb85c" stroke-width="0.2" font-size="16">小程</tspan></text>
<text x="33" y="944" font-size="15" font-family="'Liberation Mono', monospace" xml:space="preserve"><tspan fill="#5cb85c" stroke="#5cb85c" stroke-width="0.2" font-size="16">序项目</tspan><tspan fill="#5cb85c" stroke="#5cb85c" stroke-width="0.2">-</tspan><tspan fill="#5cb85c" stroke="#5cb85c" stroke-width="0.2" font-size="16">运营开发</tspan><tspan fill="#5cb85c" stroke="#5cb85c" stroke-width="0.2">-</tspan><tspan fill="#5cb85c" stroke="#5cb85c" stroke-width="0.2" font-size="16">前端</tspan><tspan fill="#5cb85c" stroke="#5cb85c" stroke-width="0.2">/H5-</tspan><tspan fill="#5cb85c" stroke="#5cb85c" stroke-width="0.2" font-size="16">前端</tspan><tspan fill="#5cb85c" stroke="#5cb85c" stroke-width="0.2">/unpackage/release/apk/__UNI__F65B7EA__20250725214131.apk     [</tspan><tspan fill="#3cb0e0" stroke="#3cb0e0" stroke-width="0.2" font-size="16" style="text-decoration:underline">打开所在目录</tspan><tspan fill="#5cb85c" stroke="#5cb85c" stroke-width="0.2">]    [</tspan></text>
<text x="33" y="964" font-size="15" font-family="'Liberation Mono', monospace" xml:space="preserve"><tspan fill="#3cb0e0" stroke="#3cb0e0" stroke-width="0.2" font-size="16" style="text-decoration:underline">一键上传到</tspan><tspan fill="#3cb0e0" stroke="#3cb0e0" stroke-width="0.2" style="text-decoration:underline">uniCloud</tspan><tspan fill="#3cb0e0" stroke="#3cb0e0" stroke-width="0.2" font-size="16" style="text-decoration:underline">（更优惠的</tspan><tspan fill="#3cb0e0" stroke="#3cb0e0" stroke-width="0.2" style="text-decoration:underline">cdn</tspan><tspan fill="#3cb0e0" stroke="#3cb0e0" stroke-width="0.2" font-size="16" style="text-decoration:underline">、长期稳定）</tspan><tspan fill="#5cb85c" stroke="#5cb85c" stroke-width="0.2">]</tspan></text>
<text x="33" y="984" font-size="15" font-family="'Liberation Mono', monospace" xml:space="preserve"><tspan fill="#e6e6e6" stroke="#e6e6e6" stroke-width="0.2">[HBuilder] </tspan><tspan fill="#a0a0a0" stroke="#a0a0a0" stroke-width="0.2">21:45:17.866</tspan><tspan fill="#e6e6e6" stroke="#e6e6e6" stroke-width="0.2"> HBuilderX</tspan><tspan fill="#e6e6e6" stroke="#e6e6e6" stroke-width="0.2" font-size="16">已支持</tspan><tspan fill="#e6e6e6" stroke="#e6e6e6" stroke-width="0.2">App cli</tspan><tspan fill="#e6e6e6" stroke="#e6e6e6" stroke-width="0.2" font-size="16">自动化打包</tspan><tspan fill="#e6e6e6" stroke="#e6e6e6" stroke-width="0.2">, </tspan><tspan fill="#e6e6e6" stroke="#e6e6e6" stroke-width="0.2" font-size="16">详情参考</tspan><tspan fill="#e6e6e6" stroke="#e6e6e6" stroke-width="0.2">: </tspan><tspan fill="#3cb0e0" stroke="#3cb0e0" stroke-width="0.2" style="text-decoration:underline">https://hx.dcloud.net.cn/cli/pack</tspan><tspan fill="#e6e6e6" stroke="#e6e6e6" stroke-width="0.2"> [</tspan><tspan fill="#3cb0e0" stroke="#3cb0e0" stroke-width="0.2" font-size="16" style="text-decoration:underline">不再提</tspan></text>
<text x="33" y="1004" font-size="15" font-family="'Liberation Mono', monospace" xml:space="preserve"><tspan fill="#3cb0e0" stroke="#3cb0e0" stroke-width="0.2" font-size="16" style="text-decoration:underline">示</tspan><tspan fill="#e6e6e6" stroke="#e6e6e6" stroke-width="0.2">]</tspan></text>
</g></svg>
<rect x="1005" y="981" width="8" height="15" fill="#2e2f2a" />
<rect x="1013" y="805" width="1" height="201" fill="#161714" />
<rect x="0" y="1006" width="1557" height="34" fill="#555555" />
<circle cx="35.8" cy="1022" r="6.5" fill="none" stroke="#b4b4b4" stroke-width="1.3"/><path d="M34.2 1018.5 A1.7 2 0 0 1 37.4 1018.5 V1021 Q37.4 1022.5 36.6 1023.2 L38.8 1024.5 Q40.5 1025.5 40.8 1026.5 A6 6 0 0 1 30.8 1026.5 Q31.1 1025.5 32.8 1024.5 L35 1023.2 Q34.2 1022.5 34.2 1021 Z" fill="#b4b4b4"/>
<text x="49" y="1027" font-size="13" fill="#e0e0e0" font-family="'Liberation Sans', sans-serif" textLength="119" lengthAdjust="spacingAndGlyphs" >836706661@qq.com</text>
<g fill="none" stroke="#d0d0d0" stroke-width="1.1"><path d="M228 1017.5 H230 M228 1021.5 H230 M228 1025.5 H230 M232 1017.5 H239 M232 1021.5 H239 M232 1025.5 H239"/><rect x="253.5" y="1016.5" width="12" height="10"/><path d="M256 1019.5 L258.5 1021.5 L256 1023.5 M259.5 1024 H262"/></g>
<text x="1247" y="1027" font-size="13" fill="#e0e0e0" font-family="'Liberation Sans', sans-serif" textLength="35" lengthAdjust="spacingAndGlyphs" >行:138</text>
<text x="1292.5" y="1027" font-size="13" fill="#e0e0e0" font-family="'Liberation Sans', sans-serif" textLength="28.5" lengthAdjust="spacingAndGlyphs" >列:11</text>
<text x="1348" y="1027" font-size="13" fill="#e0e0e0" font-family="'Liberation Sans', sans-serif" textLength="33.5" lengthAdjust="spacingAndGlyphs" >UTF-8</text>
<text x="1408" y="1027" font-size="13" fill="#e0e0e0" font-family="'Liberation Sans', sans-serif" textLength="31.5" lengthAdjust="spacingAndGlyphs" >JSON</text>
<circle cx="1466" cy="1022.5" r="7" fill="#f0f0f0"/><path d="M1463 1019 V1025.5 H1469 V1019" fill="none" stroke="#555" stroke-width="1.6"/><path d="M1468 1027 L1472 1029.5 L1471 1025 Z" fill="#f0f0f0"/>
<circle cx="1495" cy="1022" r="7.8" fill="#f5f5f5"/><path d="M1495 1017.5 V1026 M1491.8 1023 L1495 1026.3 L1498.2 1023" fill="none" stroke="#555" stroke-width="1.6"/>
<path d="M1519 1027 H1531 L1529.5 1025 V1021 A4 4 0 0 0 1520.5 1021 V1025 Z" fill="#c8b890"/><circle cx="1525" cy="1028.5" r="1.6" fill="#c8b890"/>
<rect x="0.5" y="0.5" width="1556" height="1038.5" fill="none" stroke="#8c8c8c" stroke-width="1"/>
<g transform="translate(4.3,32.5) rotate(-35)" fill="#ffffff" stroke="#ffffff" stroke-width="1.0" font-family="'Liberation Sans', sans-serif"><text x="1" y="-0.5" font-size="23" letter-spacing="3.6">云启源码</text><text x="118" y="2" font-size="29" textLength="221" lengthAdjust="spacingAndGlyphs">www.yungzs.com</text></g>
<g transform="translate(611.3,32.5) rotate(-35)" fill="#ffffff" stroke="#ffffff" stroke-width="1.0" font-family="'Liberation Sans', sans-serif"><text x="1" y="-0.5" font-size="23" letter-spacing="3.6">云启源码</text><text x="118" y="2" font-size="29" textLength="221" lengthAdjust="spacingAndGlyphs">www.yungzs.com</text></g>
<g transform="translate(1219.2,32.5) rotate(-35)" fill="#ffffff" stroke="#ffffff" stroke-width="1.0" font-family="'Liberation Sans', sans-serif"><text x="1" y="-0.5" font-size="23" letter-spacing="3.6">云启源码</text><text x="118" y="2" font-size="29" textLength="221" lengthAdjust="spacingAndGlyphs">www.yungzs.com</text></g>
<g transform="translate(4.3,532.2) rotate(-35)" fill="#ffffff" stroke="#ffffff" stroke-width="1.0" font-family="'Liberation Sans', sans-serif"><text x="1" y="-0.5" font-size="23" letter-spacing="3.6">云启源码</text><text x="118" y="2" font-size="29" textLength="221" lengthAdjust="spacingAndGlyphs">www.yungzs.com</text></g>
<g transform="translate(611.3,532.2) rotate(-35)" fill="#ffffff" stroke="#ffffff" stroke-width="1.0" font-family="'Liberation Sans', sans-serif"><text x="1" y="-0.5" font-size="23" letter-spacing="3.6">云启源码</text><text x="118" y="2" font-size="29" textLength="221" lengthAdjust="spacingAndGlyphs">www.yungzs.com</text></g>
<g transform="translate(1219.2,532.2) rotate(-35)" fill="#ffffff" stroke="#ffffff" stroke-width="1.0" font-family="'Liberation Sans', sans-serif"><text x="1" y="-0.5" font-size="23" letter-spacing="3.6">云启源码</text><text x="118" y="2" font-size="29" textLength="221" lengthAdjust="spacingAndGlyphs">www.yungzs.com</text></g>
<g transform="translate(4.3,1009.7) rotate(-35)" fill="#ffffff" stroke="#ffffff" stroke-width="1.0" font-family="'Liberation Sans', sans-serif"><text x="1" y="-0.5" font-size="23" letter-spacing="3.6">云启源码</text><text x="118" y="2" font-size="29" textLength="221" lengthAdjust="spacingAndGlyphs">www.yungzs.com</text></g>
<g transform="translate(611.3,1009.7) rotate(-35)" fill="#ffffff" stroke="#ffffff" stroke-width="1.0" font-family="'Liberation Sans', sans-serif"><text x="1" y="-0.5" font-size="23" letter-spacing="3.6">云启源码</text><text x="118" y="2" font-size="29" textLength="221" lengthAdjust="spacingAndGlyphs">www.yungzs.com</text></g>
<g transform="translate(1219.2,1009.7) rotate(-35)" fill="#ffffff" stroke="#ffffff" stroke-width="1.0" font-family="'Liberation Sans', sans-serif"><text x="1" y="-0.5" font-size="23" letter-spacing="3.6">云启源码</text><text x="118" y="2" font-size="29" textLength="221" lengthAdjust="spacingAndGlyphs">www.yungzs.com</text></g></svg></body></html>
